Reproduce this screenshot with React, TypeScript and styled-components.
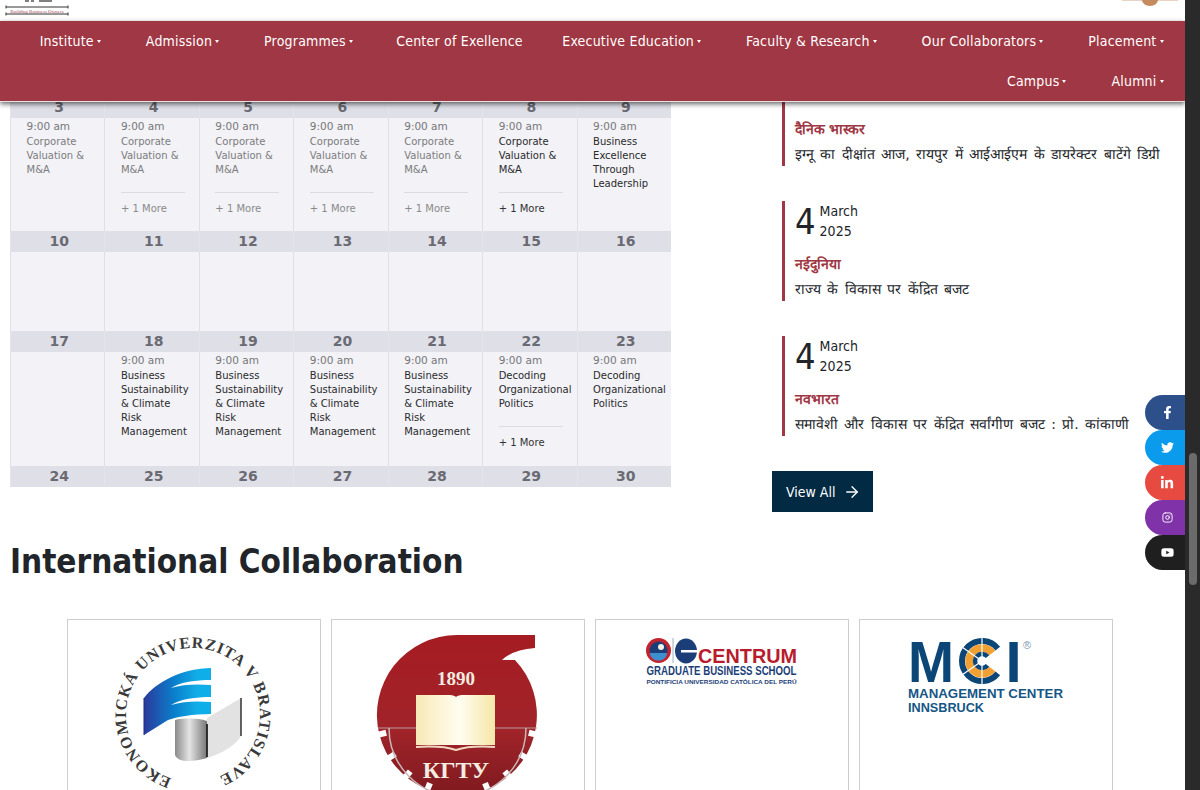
import React from "react";
import styled, { createGlobalStyle } from "styled-components";
import { FaFacebookF, FaTwitter, FaLinkedinIn, FaYoutube } from "react-icons/fa";
import { FiInstagram } from "react-icons/fi";
import { ArrowRight } from "lucide-react";

const maroon = "#a03744";

const GlobalStyle = createGlobalStyle`
  html, body {
    margin: 0;
    height: 100%;
    overflow: hidden;
    background: #fff;
    font-family: "DejaVu Sans", Verdana, sans-serif;
    font-stretch: condensed;
    color: #212529;
  }
`;

const Shell = styled.div`
  display: flex;
  width: 1200px;
  height: 790px;
  overflow: hidden;
`;

const Viewport = styled.div`
  position: relative;
  flex: 1;
  min-width: 0;
  overflow: hidden;
`;

const Scrollbar = styled.div`
  position: relative;
  width: 15px;
  background: #2a2a2a;
  &::after {
    content: "";
    position: absolute;
    left: 4px;
    top: 453px;
    width: 8px;
    height: 132px;
    border-radius: 4px;
    background: #6b6b6b;
  }
`;

const TopBar = styled.header`
  display: flex;
  justify-content: space-between;
  height: 21px;
  padding: 0 7px 0 5px;
  overflow: hidden;
`;

const Nav = styled.nav`
  position: relative;
  z-index: 2;
  display: flex;
  flex-wrap: wrap;
  justify-content: flex-end;
  height: 81px;
  background: ${maroon};
  border-bottom: 1px solid #e8e0e0;
  box-sizing: border-box;
  box-shadow: 0 2px 5px rgba(0, 0, 0, 0.6);
`;

const NavItem = styled.a<{ $plain?: boolean }>`
  display: flex;
  align-items: center;
  height: 40px;
  padding: ${(p) => (p.$plain ? "0 16px 0 22px" : "0 21.5px 0 23.5px")};
  color: #fff;
  font-size: 14px;
  letter-spacing: 0.2px;
  white-space: nowrap;
`;

const Caret = styled.span`
  margin: 1px 0 0 3px;
  border-left: 2.5px solid transparent;
  border-right: 2.5px solid transparent;
  border-top: 3.5px solid #fff;
`;

const Main = styled.main`
  display: grid;
  grid-template-columns: 661px 1fr;
  column-gap: 101px;
  margin-top: -1px;
  padding-left: 10px;
  height: 429px;
  overflow: hidden;
`;

const Calendar = styled.div`
  display: flex;
  flex-direction: column;
  width: 661px;
  font-stretch: normal;
`;

const DayRow = styled.div<{ $clip?: number }>`
  display: grid;
  grid-template-columns: repeat(7, 1fr);
  height: ${(p) => 21 - (p.$clip ?? 0)}px;
  overflow: hidden;
  background: #dfdfe8;
`;

const DayNum = styled.div<{ $clip?: number }>`
  margin-top: ${(p) => -(p.$clip ?? 0)}px;
  height: 21px;
  padding-left: 3px;
  line-height: 21px;
  text-align: center;
  font-size: 14px;
  font-weight: 700;
  color: #6a6a72;
  border-left: 1px solid #e4e4ea;
`;

const WeekRow = styled.div<{ $min: number }>`
  display: grid;
  grid-template-columns: repeat(7, 1fr);
  min-height: ${(p) => p.$min}px;
  background: #f2f2f7;
`;

const Cell = styled.div`
  min-width: 0;
  padding: 1px 6px 15px 15.5px;
  border-left: 1px solid #e0e0e4;
  font-size: 10px;
  line-height: 14px;
`;

const Time = styled.div`
  margin-bottom: 1px;
  font-size: 10.5px;
  line-height: 15px;
  color: #777;
`;

const EventTitle = styled.div<{ $past?: boolean }>`
  color: ${(p) => (p.$past ? "#7c7c7c" : "#2b2b2b")};
`;

const More = styled.div<{ $past?: boolean }>`
  margin: 15px 8px 0 0;
  padding-top: 9px;
  border-top: 1px solid #dcdce0;
  font-size: 10px;
  color: ${(p) => (p.$past ? "#8a8a8a" : "#333")};
`;

const NewsColumn = styled.aside`
  display: flex;
  flex-direction: column;
  margin-top: -35px;
`;

const NewsList = styled.div`
  display: flex;
  flex-direction: column;
  gap: 35px;
  margin-left: 10px;
`;

const NewsItem = styled.article`
  display: flex;
  flex-direction: column;
  height: 100px;
  padding-left: 10px;
  border-left: 3px solid ${maroon};
`;

const DateRow = styled.div`
  display: flex;
  align-items: center;
  gap: 4px;
  height: 40px;
  padding-top: 1px;
`;

const DateNum = styled.span`
  font-size: 36px;
  line-height: 40px;
`;

const MonthYear = styled.span`
  margin-top: -2px;
  font-size: 14px;
  line-height: 20px;
`;

const Paper = styled.h4`
  margin: 10px 0 0;
  color: ${maroon};
  font-size: 14px;
  line-height: 24px;
  font-weight: 700;
`;

const Headline = styled.p`
  margin: 1px 0 0;
  font-size: 14px;
  font-stretch: normal;
  word-spacing: 2px;
  line-height: 24px;
  white-space: nowrap;
`;

const ViewAll = styled.a`
  display: flex;
  align-items: center;
  gap: 8px;
  align-self: flex-start;
  height: 41px;
  margin-top: 35px;
  padding: 0 12px 0 14px;
  background: #022a42;
  color: #fff;
  font-size: 14px;
`;

const Section = styled.section`
  padding: 0 0 0 10px;
`;

const SectionTitle = styled.h2`
  box-sizing: border-box;
  margin: 0;
  height: 89px;
  padding-top: 9px;
  font-size: 33px;
  line-height: 46px;
  font-weight: 700;
  color: #212529;
`;

const LogoRow = styled.div`
  display: flex;
  gap: 10px;
  margin-left: 57px;
`;

const LogoCard = styled.div`
  width: 254px;
  height: 230px;
  box-sizing: border-box;
  border: 1px solid #ccc;
`;

const Socials = styled.div`
  position: absolute;
  top: 395px;
  right: 0;
  display: flex;
  flex-direction: column;
  z-index: 3;
`;

const Social = styled.a<{ $bg: string }>`
  display: flex;
  align-items: center;
  justify-content: center;
  width: 40px;
  height: 35px;
  padding-left: 4px;
  box-sizing: border-box;
  border-radius: 17.5px 0 0 17.5px;
  background: ${(p) => p.$bg};
  color: #fff;
  font-size: 13px;
`;

type Event = { title: string; more?: boolean };
type Day = { n: number; event?: Event };

const corporate = "Corporate Valuation & M&A";
const risk = "Business Sustainability & Climate Risk Management";
const decoding = "Decoding Organizational Politics";

const weeks: { min: number; days: Day[] }[] = [
  {
    min: 113,
    days: [
      { n: 3, event: { title: corporate } },
      { n: 4, event: { title: corporate, more: true } },
      { n: 5, event: { title: corporate, more: true } },
      { n: 6, event: { title: corporate, more: true } },
      { n: 7, event: { title: corporate, more: true } },
      { n: 8, event: { title: corporate, more: true } },
      { n: 9, event: { title: "Business Excellence Through Leadership" } },
    ],
  },
  {
    min: 79,
    days: [{ n: 10 }, { n: 11 }, { n: 12 }, { n: 13 }, { n: 14 }, { n: 15 }, { n: 16 }],
  },
  {
    min: 114,
    days: [
      { n: 17 },
      { n: 18, event: { title: risk } },
      { n: 19, event: { title: risk } },
      { n: 20, event: { title: risk } },
      { n: 21, event: { title: risk } },
      { n: 22, event: { title: decoding, more: true } },
      { n: 23, event: { title: decoding } },
    ],
  },
];

const nav = [
  { label: "Institute", caret: true },
  { label: "Admission", caret: true },
  { label: "Programmes", caret: true },
  { label: "Center of Exellence" },
  { label: "Executive Education", caret: true },
  { label: "Faculty & Research", caret: true },
  { label: "Our Collaborators", caret: true },
  { label: "Placement", caret: true },
  { label: "Campus", caret: true },
  { label: "Alumni", caret: true },
];

const news = [
  { paper: "दैनिक भास्कर", text: "इग्नू का दीक्षांत आज, रायपुर में आईआईएम के डायरेक्टर बाटेंगे डिग्री" },
  { paper: "नईदुनिया", text: "राज्य के विकास पर केंद्रित बजट" },
  { paper: "नवभारत", text: "समावेशी और विकास पर केंद्रित सर्वांगीण बजट : प्रो. कांकाणी" },
];

const LeftLogo = () => (
  <svg width="66" height="21" viewBox="0 0 66 21">
    <path d="M1 7H63M1 14H63" stroke="#333" strokeWidth="1" />
    <path d="M1 5.5V8.5M63 5.5V8.5M1 12.5V15.5M63 12.5V15.5" stroke="#333" strokeWidth="1" />
    <text x="32" y="12.500" fontSize="5" fill="#a5475a" textAnchor="middle" fontFamily="Liberation Serif, serif">
      Building Business Owners
    </text>
    <path d="M20 1h4M26 1h3M34 1h13" stroke="#555" strokeWidth="1.400" />
  </svg>
);

const RightLogo = () => (
  <svg width="56" height="7" viewBox="0 0 56 7">
    <rect x="0" y="0" width="56" height="1" fill="#e9d3c4" />
    <path d="M20 0h16a8 6 0 0 1-16 0z" fill="#c58a5e" />
  </svg>
);

const EuLogo = () => (
  <svg width="252" height="175" viewBox="0 0 252 175">
    <defs>
      <path id="euRing" d="M124.5 162a67 67 0 1 1 1 0" />
      <linearGradient id="euBlue" x1="0" x2="1" y1="0" y2="0">
        <stop offset="0" stopColor="#2b3a9c" />
        <stop offset="0.45" stopColor="#0a7fcc" />
        <stop offset="0.8" stopColor="#10aee8" />
      </linearGradient>
      <linearGradient id="euGrey" x1="0" x2="1" y1="0" y2="0">
        <stop offset="0" stopColor="#8a8a8a" />
        <stop offset="0.45" stopColor="#e4e4e4" />
        <stop offset="1" stopColor="#777" />
      </linearGradient>
    </defs>
    <text fontFamily="Liberation Serif, serif" fontWeight="700" fontSize="16" fill="#3a3a3a">
      <textPath href="#euRing" startOffset="5%" textLength="372">EKONOMICKÁ UNIVERZITA V BRATISLAVE</textPath>
    </text>
    <path d="M139 98L173 78V116C168 125 155 133 139 138z" fill="#e2e2e2" />
    <path d="M173 78V116" stroke="#333" strokeWidth="1.500" />
    <path d="M107 100V135C110 143 125 142 139 138V101C130 98 115 98 107 100z" fill="url(#euGrey)" />
    <path d="M139 104V137" stroke="#222" strokeWidth="1.800" />
    <path d="M76 78C88 62 115 48 143 48V60C128 60 112 62 103 68C115 64 130 64 143 65V77C128 77 112 79 103 85C115 81 130 81 143 82V94C125 94 108 97 100 100L76 115z" fill="url(#euBlue)" />
    <path d="M76 78V115" stroke="#1f2a80" strokeWidth="1" />
  </svg>
);

const gearAngles = [14, 32, 50, 68, 112, 130, 148, 166];

const KgtuLogo = () => (
  <svg width="252" height="175" viewBox="0 0 252 175">
    <defs>
      <linearGradient id="bookFill" x1="0" x2="1" y1="0" y2="0">
        <stop offset="0" stopColor="#f7e9b6" />
        <stop offset="0.55" stopColor="#fffdf0" />
        <stop offset="1" stopColor="#f5e6a8" />
      </linearGradient>
      <linearGradient id="discFill" x1="0" x2="0" y1="0" y2="1">
        <stop offset="0" stopColor="#a51c22" />
        <stop offset="0.6" stopColor="#a0242a" />
        <stop offset="1" stopColor="#7e1a1f" />
      </linearGradient>
    </defs>
    <path d="M125.5 15H203V28Q180 30 170 40L183 40A80 80 0 1 1 125.5 15z" fill="url(#discFill)" />
    {gearAngles.map((a) => (
      <rect key={a} x="199" y="92" width="9" height="6" fill="#fff" transform={`rotate(${a} 125.5 95)`} />
    ))}
    <path d="M46 108H205" stroke="#b89a9a" strokeWidth="1" />
    <path d="M57 108a68.500 68.500 0 0 0 137 0" fill="none" stroke="#c8b6b6" strokeWidth="1.500" />
    <path d="M84 75H118C121 75 123 76 124 77C125 76 127 75 130 75H163V125H84z" fill="url(#bookFill)" />
    <path d="M84 127C100 126 115 127 124 130C133 127 148 126 163 127" fill="none" stroke="#f0d8c0" strokeWidth="2" />
    <text x="124" y="65" textAnchor="middle" fontSize="19" fontWeight="700" fill="#f3ece0" fontFamily="Liberation Serif, serif">1890</text>
    <text x="124" y="158" textAnchor="middle" fontSize="24" fontWeight="700" fill="#f3ece0" fontFamily="Liberation Serif, serif">КГТУ</text>
  </svg>
);

const CentrumLogo = () => (
  <svg width="252" height="80" viewBox="0 0 252 80">
    <circle cx="62.500" cy="30.500" r="12.500" fill="#c1232f" />
    <circle cx="62.500" cy="30.500" r="9" fill="#1c3e78" />
    <path d="M54 33h17v1.500a9 9 0 0 1-17 0z" fill="#3d8fd0" />
    <circle cx="65" cy="27" r="3" fill="#f4f0e4" />
    <path d="M77 18v25" stroke="#9db2c9" />
    <ellipse cx="90" cy="31" rx="11" ry="12.500" fill="#1c3e78" />
    <rect x="85" y="30" width="17" height="2.500" fill="#fff" />
    <text x="102" y="43" fontFamily="Liberation Sans, sans-serif" fontWeight="700" fontSize="19.500" fill="#b81c2c" textLength="99" lengthAdjust="spacingAndGlyphs">CENTRUM</text>
    <text x="50.500" y="55" fontFamily="Liberation Sans, sans-serif" fontWeight="700" fontSize="12" fill="#1c3e78" textLength="150" lengthAdjust="spacingAndGlyphs">GRADUATE BUSINESS SCHOOL</text>
    <text x="50.500" y="64" fontFamily="Liberation Sans, sans-serif" fontWeight="700" fontSize="5.500" fill="#1c3e78" textLength="150" lengthAdjust="spacingAndGlyphs">PONTIFICIA UNIVERSIDAD CATÓLICA DEL PERÚ</text>
  </svg>
);

// ring of the MCI "C", open towards the right
const arcPath = (r: number) => {
  const a = (38 * Math.PI) / 180;
  const x = 122 + r * Math.cos(a);
  const dy = r * Math.sin(a);
  return `M${x} ${41 - dy}A${r} ${r} 0 1 0 ${x} ${41 + dy}`;
};

const MciLogo = () => (
  <svg width="252" height="110" viewBox="0 0 252 110">
    <text x="48" y="62" fontFamily="Liberation Sans, sans-serif" fontWeight="700" fontSize="58" fill="#0b4677" textLength="46" lengthAdjust="spacingAndGlyphs">M</text>
    <path d={arcPath(20)} fill="none" stroke="#0b4677" strokeWidth="6" />
    <path d={arcPath(13)} fill="none" stroke="#f2a031" strokeWidth="7.500" />
    <path d={arcPath(7)} fill="none" stroke="#0b4677" strokeWidth="4.500" />
    {[90, 145, 215, 270].map((a) => (
      <path key={a} d="M126 41H146" stroke="#fff" strokeWidth="1.200" transform={`rotate(${a} 122 41)`} />
    ))}
    <text x="145.500" y="62" fontFamily="Liberation Sans, sans-serif" fontWeight="700" fontSize="58" fill="#0b4677">I</text>
    <text x="163" y="29" fontFamily="Liberation Sans, sans-serif" fontSize="11" fill="#7d9ab5">®</text>
    <text x="48" y="78" fontFamily="Liberation Sans, sans-serif" fontWeight="700" fontSize="13" fill="#155686" textLength="155" lengthAdjust="spacingAndGlyphs">MANAGEMENT CENTER</text>
    <text x="48" y="92" fontFamily="Liberation Sans, sans-serif" fontWeight="700" fontSize="13" fill="#155686" textLength="76" lengthAdjust="spacingAndGlyphs">INNSBRUCK</text>
  </svg>
);

const App = () => {
  return (
    <Shell>
      <GlobalStyle />
      <Viewport>
        <TopBar>
          <LeftLogo />
          <RightLogo />
        </TopBar>
        <Nav>
          {nav.map((item) => (
            <NavItem key={item.label} $plain={!item.caret}>
              {item.label}
              {item.caret && <Caret />}
            </NavItem>
          ))}
        </Nav>
        <Main>
          <Calendar>
            {weeks.map((week, w) => (
              <React.Fragment key={w}>
                <DayRow $clip={w === 0 ? 4 : 0}>
                  {week.days.map((d) => (
                    <DayNum key={d.n} $clip={w === 0 ? 4 : 0}>{d.n}</DayNum>
                  ))}
                </DayRow>
                <WeekRow $min={week.min}>
                  {week.days.map((d) => {
                    const past = d.n < 8;
                    return (
                      <Cell key={d.n}>
                        {d.event && (
                          <>
                            <Time>9:00 am</Time>
                            <EventTitle $past={past}>{d.event.title}</EventTitle>
                            {d.event.more && <More $past={past}>+ 1 More</More>}
                          </>
                        )}
                      </Cell>
                    );
                  })}
                </WeekRow>
              </React.Fragment>
            ))}
            <DayRow>
              {[24, 25, 26, 27, 28, 29, 30].map((n) => (
                <DayNum key={n}>{n}</DayNum>
              ))}
            </DayRow>
          </Calendar>
          <NewsColumn>
            <NewsList>
              {news.map((n) => (
                <NewsItem key={n.paper}>
                  <DateRow>
                    <DateNum>4</DateNum>
                    <MonthYear>March<br />2025</MonthYear>
                  </DateRow>
                  <Paper>{n.paper}</Paper>
                  <Headline>{n.text}</Headline>
                </NewsItem>
              ))}
            </NewsList>
            <ViewAll>
              View All
              <ArrowRight size={18} strokeWidth={1.8} />
            </ViewAll>
          </NewsColumn>
        </Main>
        <Section>
          <SectionTitle>International Collaboration</SectionTitle>
          <LogoRow>
            <LogoCard><EuLogo /></LogoCard>
            <LogoCard><KgtuLogo /></LogoCard>
            <LogoCard><CentrumLogo /></LogoCard>
            <LogoCard><MciLogo /></LogoCard>
          </LogoRow>
        </Section>
        <Socials>
          <Social $bg="#2d4f8a"><FaFacebookF /></Social>
          <Social $bg="#0a9bed"><FaTwitter size={13} /></Social>
          <Social $bg="#e74a40"><FaLinkedinIn size={14} /></Social>
          <Social $bg="#8033a8"><FiInstagram size={11} /></Social>
          <Social $bg="#1f1f1f"><FaYoutube size={13} /></Social>
        </Socials>
      </Viewport>
      <Scrollbar />
    </Shell>
  );
};

export default App;
